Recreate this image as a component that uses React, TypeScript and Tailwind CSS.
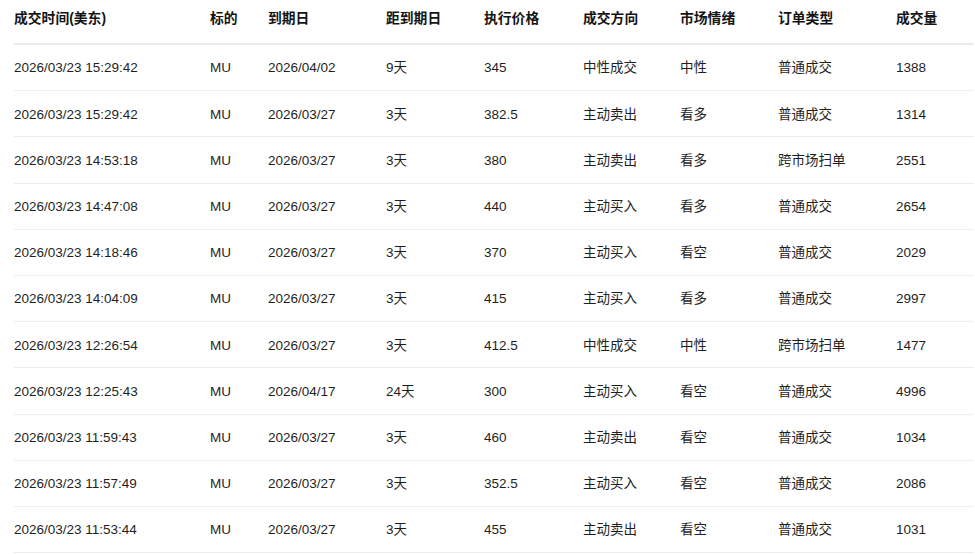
const cols = ['成交时间(美东)', '标的', '到期日', '距到期日', '执行价格', '成交方向', '市场情绪', '订单类型', '成交量']
const widths = ['w-[196px]', 'w-[58px]', 'w-[118px]', 'w-[98px]', 'w-[99px]', 'w-[97px]', 'w-[98px]', 'w-[118px]', 'flex-1']

const rows: string[][] = [
  ['2026/03/23 15:29:42', 'MU', '2026/04/02', '9天', '345', '中性成交', '中性', '普通成交', '1388'],
  ['2026/03/23 15:29:42', 'MU', '2026/03/27', '3天', '382.5', '主动卖出', '看多', '普通成交', '1314'],
  ['2026/03/23 14:53:18', 'MU', '2026/03/27', '3天', '380', '主动卖出', '看多', '跨市场扫单', '2551'],
  ['2026/03/23 14:47:08', 'MU', '2026/03/27', '3天', '440', '主动买入', '看多', '普通成交', '2654'],
  ['2026/03/23 14:18:46', 'MU', '2026/03/27', '3天', '370', '主动买入', '看空', '普通成交', '2029'],
  ['2026/03/23 14:04:09', 'MU', '2026/03/27', '3天', '415', '主动买入', '看多', '普通成交', '2997'],
  ['2026/03/23 12:26:54', 'MU', '2026/03/27', '3天', '412.5', '中性成交', '中性', '跨市场扫单', '1477'],
  ['2026/03/23 12:25:43', 'MU', '2026/04/17', '24天', '300', '主动买入', '看空', '普通成交', '4996'],
  ['2026/03/23 11:59:43', 'MU', '2026/03/27', '3天', '460', '主动卖出', '看空', '普通成交', '1034'],
  ['2026/03/23 11:57:49', 'MU', '2026/03/27', '3天', '352.5', '主动买入', '看空', '普通成交', '2086'],
  ['2026/03/23 11:53:44', 'MU', '2026/03/27', '3天', '455', '主动卖出', '看空', '普通成交', '1031'],
]

export default function App() {
  return (
    <div
      className="h-[554px] overflow-hidden bg-white pl-[14px] pr-[1px] text-[13.5px]"
      style={{ fontFamily: '"Liberation Sans", "Noto Sans CJK SC", sans-serif' }}
    >
      {/* Header */}
      <div className="flex h-[45px] items-center border-b-2 border-[#ececec] pb-[5px] text-[13.8px] font-bold text-[#141414]">
        {cols.map((c, i) => (
          <div key={c} className={widths[i]}>{c}</div>
        ))}
      </div>

      {/* Rows */}
      {rows.map((r, ri) => (
        <div key={ri} className="flex h-[46.2px] items-center border-b border-[#eeeeee] pt-[2px] text-[#1f1f1f]">
          {r.map((v, i) => (
            <div key={i} className={widths[i]}>{v}</div>
          ))}
        </div>
      ))}
    </div>
  )
}
